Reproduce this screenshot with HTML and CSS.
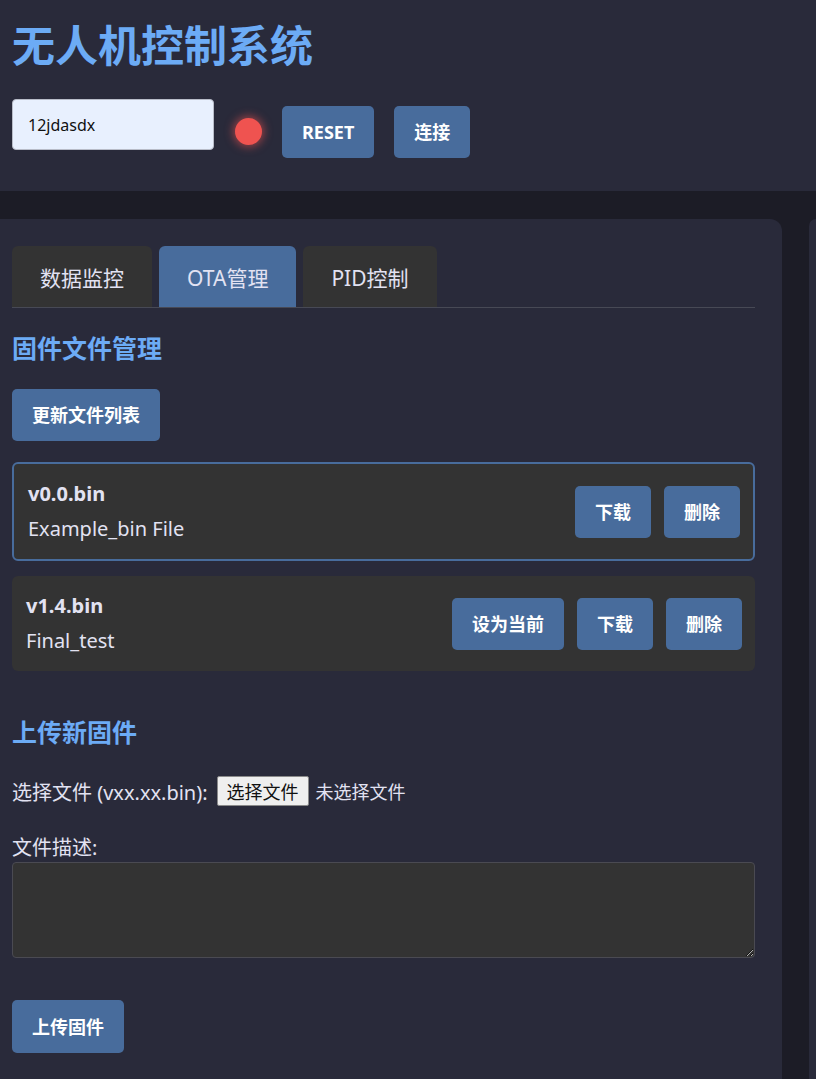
FILE: index.html
```html
<!DOCTYPE html>
<html lang="zh-CN">
<head>
<meta charset="utf-8">
<title>无人机控制系统</title>
<link rel="stylesheet" href="styles.css">
</head>
<body>
<header class="header">
  <h1 class="title">无人机控制系统</h1>
  <div class="controls">
    <input class="device-input" type="text" value="12jdasdx">
    <span class="status-dot"></span>
    <button class="btn">RESET</button>
    <button class="btn">连接</button>
  </div>
</header>
<main class="main">
  <section class="panel panel-left">
    <div class="tabs">
      <button class="tab">数据监控</button>
      <button class="tab active">OTA管理</button>
      <button class="tab">PID控制</button>
    </div>
    <h2 class="section-title">固件文件管理</h2>
    <button class="btn">更新文件列表</button>
    <div class="file-list">
      <div class="file-item current">
        <div class="file-info">
          <div class="file-name">v0.0.bin</div>
          <div class="file-desc">Example_bin File</div>
        </div>
        <div class="file-actions">
          <button class="btn">下载</button>
          <button class="btn">删除</button>
        </div>
      </div>
      <div class="file-item">
        <div class="file-info">
          <div class="file-name">v1.4.bin</div>
          <div class="file-desc">Final_test</div>
        </div>
        <div class="file-actions">
          <button class="btn">设为当前</button>
          <button class="btn">下载</button>
          <button class="btn">删除</button>
        </div>
      </div>
    </div>
    <h2 class="section-title upload-title">上传新固件</h2>
    <div class="form-row">
      <span class="form-label">选择文件 (vxx.xx.bin):</span>
      <label class="file-btn">选择文件<input class="file-hidden" type="file"></label>
      <span class="file-none">未选择文件</span>
    </div>
    <div class="desc-label">文件描述:</div>
    <textarea class="desc-input"></textarea>
    <div class="upload-row">
      <button class="btn">上传固件</button>
    </div>
  </section>
  <section class="panel panel-right"></section>
</main>
</body>
</html>
```

FILE: styles.css
```css
* { box-sizing: border-box; }

html, body {
  margin: 0;
  background: #1c1c26;
  color: #e2e2f2;
  font-family: "Noto Sans", "Noto Sans CJK SC", sans-serif;
  overflow: hidden;
}

.header {
  background: #292a3a;
  padding: 16px 12px 27px;
  height: 191px;
}

.title {
  margin: 0;
  font-size: 43px;
  line-height: 54px;
  font-weight: 700;
  color: #6cabf5;
  font-family: "Noto Sans CJK SC", sans-serif;
}

.controls {
  margin-top: 29px;
  display: flex;
  align-items: center;
  gap: 20px;
}

.device-input {
  width: 202px;
  height: 51px;
  margin-bottom: 14px;
  margin-right: 1px;
  padding: 0 15px;
  background: #e8f0fe;
  border: 1px solid #b8bcc8;
  border-radius: 4px;
  font-family: "Noto Sans", sans-serif;
  font-size: 16px;
  color: #111;
  outline: none;
}

.status-dot {
  width: 27px;
  height: 27px;
  border-radius: 50%;
  background: #ef5350;
  box-shadow: 0 0 8px 2px rgba(239, 83, 80, 0.55);
}

.btn {
  height: 52px;
  padding: 0 20px;
  background: #486c9c;
  color: #fff;
  border: none;
  border-radius: 5px;
  font-family: "Noto Sans", "Noto Sans CJK SC", sans-serif;
  font-size: 18px;
  font-weight: 700;
  line-height: 24px;
  cursor: pointer;
}

.main {
  display: grid;
  grid-template-columns: 782px 1fr;
  gap: 27px;
  padding-top: 28px;
}

.panel {
  background: #292a3a;
  height: 900px;
}

.panel-left {
  border-radius: 0 12px 0 0;
  padding: 27px 27px 27px 12px;
}

.panel-right {
  border-radius: 12px 0 0 0;
}

.tabs {
  display: flex;
  gap: 7px;
  border-bottom: 1px solid #474955;
}

.tab {
  height: 61px;
  padding: 0 28px;
  background: #333333;
  color: #e2e2f2;
  border: none;
  border-radius: 6px 6px 0 0;
  font-family: "Noto Sans", "Noto Sans CJK SC", sans-serif;
  font-size: 21px;
}

.tab.active {
  background: #486c9c;
}

.section-title {
  margin: 23px 0 26px;
  font-size: 25px;
  line-height: 32px;
  font-weight: 700;
  color: #6cabf5;
  font-family: "Noto Sans CJK SC", sans-serif;
}

.file-list {
  margin-top: 21px;
  display: flex;
  flex-direction: column;
  gap: 15px;
}

.file-item {
  display: flex;
  align-items: center;
  justify-content: space-between;
  background: #333333;
  border-radius: 6px;
  padding: 14px 13px 14px 14px;
  min-height: 95px;
}

.file-item.current {
  border: 2px solid #486c9c;
  min-height: 99px;
  padding-right: 13px;
}

.file-info {
  display: flex;
  flex-direction: column;
  gap: 7px;
}

.file-name {
  font-size: 20px;
  font-weight: 700;
  line-height: 28px;
}

.file-desc {
  font-size: 20px;
  line-height: 28px;
}

.file-actions {
  display: flex;
  gap: 13px;
}

.upload-title {
  margin-top: 44px;
  margin-bottom: 29px;
}

.form-row {
  display: flex;
  align-items: center;
  gap: 7px;
  height: 30px;
}

.form-label {
  font-size: 20px;
  margin-right: 2px;
}

.file-btn {
  display: inline-block;
  height: 30px;
  padding: 0 9px;
  background: #efefef;
  color: #111;
  border: 1px solid #8a8a8a;
  border-radius: 2px;
  font-size: 18px;
  line-height: 28px;
  font-family: "Noto Sans CJK SC", sans-serif;
}

.file-hidden {
  display: none;
}

.file-none {
  font-size: 18px;
  font-family: "Noto Sans CJK SC", sans-serif;
}

.desc-label {
  margin-top: 28px;
  font-size: 20px;
  line-height: 28px;
}

.desc-input {
  display: block;
  width: 743px;
  height: 96px;
  background: #333333;
  border: 1px solid #4a4a52;
  border-radius: 4px;
  color: #e2e2f2;
  resize: vertical;
}

.upload-row {
  margin-top: 42px;
}

.upload-row .btn {
  height: 53px;
}
```
